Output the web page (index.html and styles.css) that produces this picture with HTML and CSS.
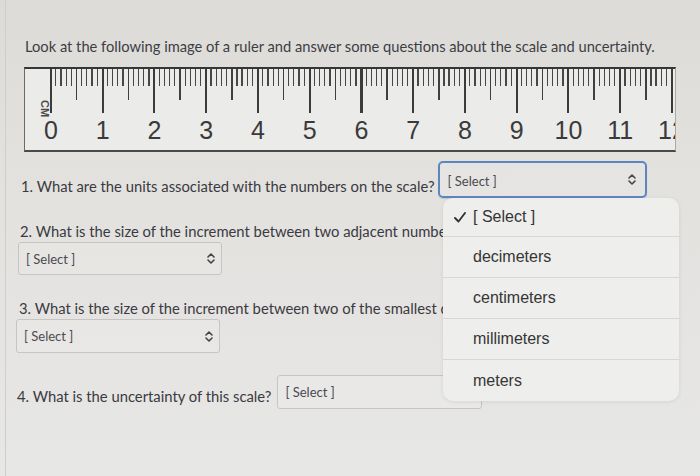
FILE: index.html
```html
<!DOCTYPE html>
<html lang="en">
<head>
<meta charset="utf-8">
<title>Ruler quiz</title>
<link rel="stylesheet" href="styles.css">
</head>
<body>
<div class="page">
  <p class="intro">Look at the following image of a ruler and answer some questions about the scale and uncertainty.</p>

  <div class="ruler">
    <div class="ruler-label">CM</div>
    <div class="ruler-scale">
      <div class="ticks"></div>
      <div class="nums">
        <span>0</span><span>1</span><span>2</span><span>3</span><span>4</span><span>5</span><span>6</span><span>7</span><span>8</span><span>9</span><span>10</span><span>11</span><span>12</span>
      </div>
    </div>
  </div>

  <div class="q q-inline q-one">
    <span class="qtext">1. What are the units associated with the numbers on the scale?</span>
    <div class="select select-focus">
      <span class="select-value">[ Select ]</span>
      <svg class="chev" viewBox="0 0 8 11" width="8" height="11"><path d="M1 4 L4 1 L7 4 M1 7 L4 10 L7 7" fill="none" stroke="#444" stroke-width="1.6" stroke-linecap="round" stroke-linejoin="round"/></svg>
    </div>
  </div>

  <div class="q q-block q-two">
    <p class="qtext">2. What is the size of the increment between two adjacent numbers on the scale?</p>
    <div class="select">
      <span class="select-value">[ Select ]</span>
      <svg class="chev" viewBox="0 0 8 11" width="8" height="11"><path d="M1 4 L4 1 L7 4 M1 7 L4 10 L7 7" fill="none" stroke="#444" stroke-width="1.6" stroke-linecap="round" stroke-linejoin="round"/></svg>
    </div>
  </div>

  <div class="q q-block q-three">
    <p class="qtext">3. What is the size of the increment between two of the smallest divisions?</p>
    <div class="select">
      <span class="select-value">[ Select ]</span>
      <svg class="chev" viewBox="0 0 8 11" width="8" height="11"><path d="M1 4 L4 1 L7 4 M1 7 L4 10 L7 7" fill="none" stroke="#444" stroke-width="1.6" stroke-linecap="round" stroke-linejoin="round"/></svg>
    </div>
  </div>

  <div class="q q-inline q-four">
    <span class="qtext">4. What is the uncertainty of this scale?</span>
    <div class="select">
      <span class="select-value">[ Select ]</span>
      <svg class="chev" viewBox="0 0 8 11" width="8" height="11"><path d="M1 4 L4 1 L7 4 M1 7 L4 10 L7 7" fill="none" stroke="#444" stroke-width="1.6" stroke-linecap="round" stroke-linejoin="round"/></svg>
    </div>
  </div>
</div>

<ul class="menu">
  <li class="menu-item selected"><svg class="check" viewBox="0 0 12 11" width="12" height="11"><path d="M1 6 L4.5 9.5 L11 1" fill="none" stroke="#333" stroke-width="1.9" stroke-linecap="round" stroke-linejoin="round"/></svg>[ Select ]</li>
  <li class="menu-item">decimeters</li>
  <li class="menu-item">centimeters</li>
  <li class="menu-item">millimeters</li>
  <li class="menu-item">meters</li>
</ul>
</body>
</html>
```

FILE: styles.css
```css
html, body {
  margin: 0;
  padding: 0;
}

body {
  width: 700px;
  height: 476px;
  overflow: hidden;
  position: relative;
  background: linear-gradient(to bottom, #dcdbd8 0%, #e2e1de 35%, #e5e4e2 70%, #e7e7e5 100%);
  font-family: Lato, "Open Sans", sans-serif;
  color: #3b3b40;
}

.page {
  margin-left: 5px;
  border-left: 1px solid #cfceca;
  height: 476px;
  box-sizing: border-box;
  padding-left: 9px;
}

.intro {
  margin: 0;
  padding-top: 37px;
  padding-left: 10px;
  font-size: 14.7px;
  line-height: 18px;
  white-space: nowrap;
  color: #3d3d44;
}

/* ---------- ruler ---------- */
.ruler {
  margin-top: 12px;
  margin-left: 9px;
  width: 652px;
  height: 85px;
  box-sizing: border-box;
  border-top: 2px solid #363636;
  border-bottom: 2px solid #4a4a4a;
  border-left: 1px solid #6a6a6a;
  border-right: 1px solid #a9a9a7;
  background: #ebebe9;
  display: flex;
  overflow: hidden;
}

.ruler-label {
  flex: 0 0 25px;
  box-sizing: border-box;
  padding-top: 31px;
  padding-left: 2px;
  writing-mode: vertical-rl;
  font-family: "Liberation Sans", Arial, sans-serif;
  font-weight: bold;
  font-size: 11px;
  line-height: 11px;
  color: #4a4a4a;
}

.ruler-scale {
  flex: 1;
  min-width: 0;
}

.ticks {
  height: 44px;
  background:
    repeating-linear-gradient(to right, #3b3b3b 0 2px, transparent 2px 51.75px) 0 0 / 100% 44px no-repeat,
    repeating-linear-gradient(to right, #404040 0 1.6px, transparent 1.6px 25.875px) 0 0 / 100% 31px no-repeat,
    repeating-linear-gradient(to right, #474747 0 1.2px, transparent 1.2px 5.175px) 0 0 / 100% 17px no-repeat;
}

.nums {
  display: flex;
  margin-left: -24.9px;
  margin-top: 2px;
}

.nums span {
  flex: 0 0 51.75px;
  text-align: center;
  font-family: "Liberation Sans", Arial, sans-serif;
  font-size: 25px;
  line-height: 30px;
  color: #3a3a3a;
}

/* ---------- questions ---------- */
.q {
  white-space: nowrap;
}

.qtext {
  margin: 0;
  font-size: 14.8px;
  line-height: 18px;
  color: #3a3a40;
}

.q-inline {
  display: flex;
  align-items: flex-start;
}

.q-one {
  margin-top: 9px;
  margin-left: 6px;
}

.q-one .qtext {
  padding-top: 16px;
  margin-right: 3px;
}

.q-two {
  margin-top: 24px;
  margin-left: 5px;
}

.q-two .select {
  margin-left: -2px;
}

.q-three {
  margin-top: 24px;
  margin-left: 4px;
}

.q-three .select {
  margin-left: -3px;
}

.q-four {
  margin-top: 22px;
  margin-left: 2px;
}

.q-four .qtext {
  padding-top: 12px;
  margin-right: 6px;
}

.select {
  margin-top: 2px;
  width: 204px;
  height: 34px;
  box-sizing: border-box;
  border: 1px solid #c6c5c2;
  border-radius: 3px;
  background: rgba(255, 255, 255, 0.12);
  display: flex;
  align-items: center;
  justify-content: space-between;
  padding: 0 6px 0 7px;
}

.q-two .select {
  height: 33px;
}

.q-inline .select {
  margin-top: 0;
}

.q-four .select {
  width: 205px;
}

.select-value {
  font-size: 13px;
  line-height: 16px;
  color: #4a4a50;
}

.chev {
  display: block;
}

.select-focus {
  width: 209px;
  height: 37px;
  border: 2px solid #5d86c1;
  border-radius: 5px;
  padding: 2px 9px 0 8px;
  box-shadow: 0 1px 1px rgba(0, 0, 0, 0.12);
}

.select-focus .chev {
  margin-top: -3px;
}

/* ---------- open dropdown ---------- */
.menu {
  position: absolute;
  left: 443px;
  top: 198px;
  width: 236px;
  margin: 0;
  padding: 0;
  list-style: none;
  background: #eeeeec;
  border-radius: 10px;
  box-shadow: 0 1px 4px rgba(0, 0, 0, 0.08);
  overflow: hidden;
}

.menu-item {
  height: 41px;
  box-sizing: border-box;
  display: flex;
  align-items: center;
  padding-left: 30px;
  border-bottom: 1px solid #d7d7d4;
  font-family: "Liberation Sans", Arial, sans-serif;
  font-size: 16px;
  color: #353535;
}

.menu-item:last-child {
  border-bottom: none;
}

.menu-item.selected {
  height: 39px;
  padding-left: 11px;
}

.check {
  margin-right: 7px;
  display: block;
}
```
